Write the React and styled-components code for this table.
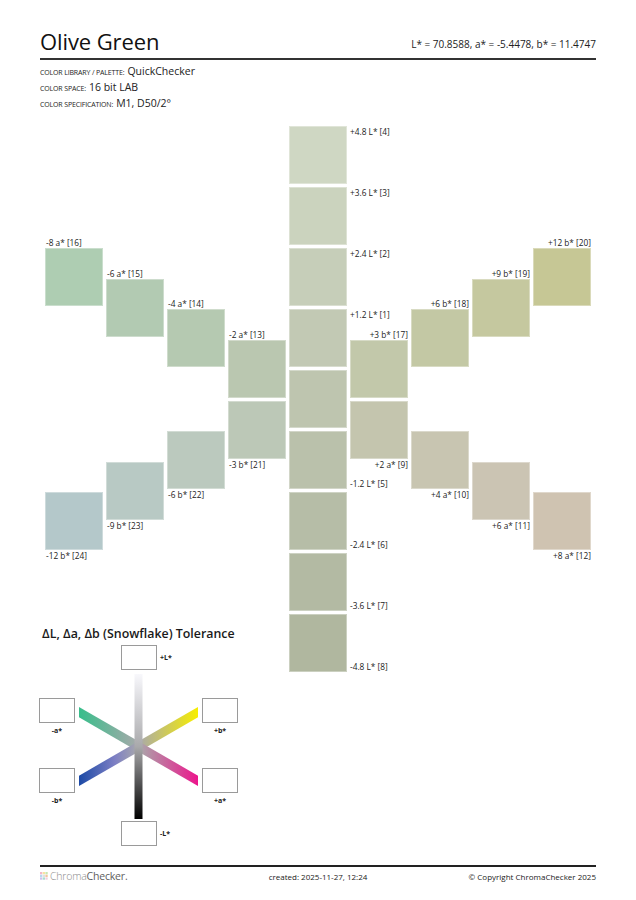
import styled, { createGlobalStyle } from "styled-components";

const GlobalStyle = createGlobalStyle`
  body {
    margin: 0;
    background: #fff;
    font-family: "Open Sans", "DejaVu Sans", sans-serif;
    color: #1a1a1a;
  }
`;

const Page = styled.div`
  width: 556px;
  padding: 26px 40px 0;
`;

const Header = styled.header`
  display: flex;
  justify-content: space-between;
  align-items: baseline;
  border-bottom: 2px solid #333;
  padding-bottom: 2px;
`;

const Title = styled.h1`
  margin: 0;
  font-size: 22px;
  line-height: 30px;
  font-weight: 400;
  letter-spacing: -0.1px;
  color: #111;
`;

const LabValue = styled.div`
  font-size: 10px;
  color: #222;
  position: relative;
  top: -2px;
`;

const Meta = styled.div`
  padding-top: 4px;
  display: flex;
  flex-direction: column;
`;

const MetaRow = styled.div`
  display: flex;
  align-items: baseline;
  line-height: 15px;
  font-size: 10.5px;
  color: #222;
`;

const MetaKey = styled.span`
  font-size: 7px;
  text-transform: uppercase;
  letter-spacing: -0.15px;
  margin-right: 3px;
`;

// swatch chart: 9 columns, rows at half the swatch pitch
const Chart = styled.div`
  display: grid;
  margin: 14px 0 0 5px;
  grid-template-columns: repeat(9, 58px);
  grid-template-rows: repeat(18, 27.5px);
  grid-auto-rows: auto;
  gap: 3px;
`;

const Swatch = styled.div`
  position: relative;
  grid-column: ${(p) => p.$col};
  grid-row: ${(p) => p.$row} / span 2;
  background: ${(p) => p.$bg};
  box-shadow: inset 0 0 0 1px rgba(255, 255, 255, 0.35);
`;

const labelPlaces = {
  rightTop: "left: calc(100% + 3px); top: 0;",
  rightBottom: "left: calc(100% + 3px); bottom: 0;",
  topLeft: "left: 1px; bottom: 100%;",
  topRight: "right: 0; bottom: 100%;",
  bottomLeft: "left: 1px; top: 100%;",
  bottomRight: "right: 0; top: 100%;",
};

const SwatchLabel = styled.span`
  position: absolute;
  ${(p) => labelPlaces[p.$pos]}
  font-size: 8.3px;
  line-height: 11px;
  white-space: nowrap;
  color: #222;
`;

const Tolerance = styled.section`
  grid-column: 1 / span 4;
  grid-row: 17 / span 3;
  margin-left: -6px;
  padding-top: 12px;
`;

const ToleranceTitle = styled.h2`
  margin: 0 0 1px 3px;
  font-size: 12.4px;
  line-height: 16px;
  font-weight: 600;
  white-space: nowrap;
  color: #1a1a1a;
`;

const Flake = styled.div`
  position: relative;
  width: 200px;
  height: 203px;
`;

const Arms = styled.svg`
  position: absolute;
  left: 0;
  top: 0;
`;

const Node = styled.div`
  position: absolute;
  left: ${(p) => p.$x}px;
  top: ${(p) => p.$y}px;
  display: flex;
  flex-direction: ${(p) => (p.$side === "right" ? "row" : "column")};
  align-items: center;
  gap: 3px;
`;

const NodeBox = styled.div`
  width: 34px;
  height: 23px;
  border: 1px solid #9a9a9a;
  background: #fff;
`;

const NodeLabel = styled.span`
  font-size: 7px;
  font-weight: 700;
  line-height: 9px;
  color: #222;
`;

const Footer = styled.footer`
  display: grid;
  grid-template-columns: 1fr auto 1fr;
  align-items: center;
  margin-top: 19px;
  border-top: 2px solid #222;
  padding-top: 2px;
  font-size: 8px;
  color: #222;
`;

const Brand = styled.div`
  display: flex;
  align-items: center;
  gap: 2px;
  font-size: 10.5px;
  letter-spacing: -0.2px;
`;

const BrandLight = styled.span`
  font-weight: 300;
  color: #8c8c8c;
`;

const BrandBold = styled.span`
  font-weight: 400;
  color: #5e5e5e;
`;

const FooterRight = styled.div`
  justify-self: end;
`;

const swatches = [
  { col: 5, r: 0, bg: "#cfd7c3", text: "+4.8 L* [4]", pos: "rightTop" },
  { col: 5, r: 2, bg: "#cbd3be", text: "+3.6 L* [3]", pos: "rightTop" },
  { col: 5, r: 4, bg: "#c6ceb9", text: "+2.4 L* [2]", pos: "rightTop" },
  { col: 5, r: 6, bg: "#c2c9b4", text: "+1.2 L* [1]", pos: "rightTop" },
  { col: 5, r: 8, bg: "#bec5af" },
  { col: 5, r: 10, bg: "#bac1ab", text: "-1.2 L* [5]", pos: "rightBottom" },
  { col: 5, r: 12, bg: "#b6bda7", text: "-2.4 L* [6]", pos: "rightBottom" },
  { col: 5, r: 14, bg: "#b3baa3", text: "-3.6 L* [7]", pos: "rightBottom" },
  { col: 5, r: 16, bg: "#b0b79f", text: "-4.8 L* [8]", pos: "rightBottom" },

  { col: 1, r: 4, bg: "#aecdb2", text: "-8 a* [16]", pos: "topLeft" },
  { col: 2, r: 5, bg: "#b2cab2", text: "-6 a* [15]", pos: "topLeft" },
  { col: 3, r: 6, bg: "#b5c9b1", text: "-4 a* [14]", pos: "topLeft" },
  { col: 4, r: 7, bg: "#bac7b0", text: "-2 a* [13]", pos: "topLeft" },

  { col: 4, r: 9, bg: "#bcc8b7", text: "-3 b* [21]", pos: "bottomLeft" },
  { col: 3, r: 10, bg: "#bbc9be", text: "-6 b* [22]", pos: "bottomLeft" },
  { col: 2, r: 11, bg: "#b8c9c4", text: "-9 b* [23]", pos: "bottomLeft" },
  { col: 1, r: 12, bg: "#b4c8ca", text: "-12 b* [24]", pos: "bottomLeft" },

  { col: 6, r: 7, bg: "#c2c8aa", text: "+3 b* [17]", pos: "topRight" },
  { col: 7, r: 6, bg: "#c3c8a4", text: "+6 b* [18]", pos: "topRight" },
  { col: 8, r: 5, bg: "#c5c89f", text: "+9 b* [19]", pos: "topRight" },
  { col: 9, r: 4, bg: "#c6c795", text: "+12 b* [20]", pos: "topRight" },

  { col: 6, r: 9, bg: "#c4c5ae", text: "+2 a* [9]", pos: "bottomRight" },
  { col: 7, r: 10, bg: "#c8c5b1", text: "+4 a* [10]", pos: "bottomRight" },
  { col: 8, r: 11, bg: "#cbc4b3", text: "+6 a* [11]", pos: "bottomRight" },
  { col: 9, r: 12, bg: "#cfc3b1", text: "+8 a* [12]", pos: "bottomRight" },
];

const nodes = [
  { x: 82, y: 2, label: "+L*", side: "right" },
  { x: 0, y: 55, label: "-a*", side: "below" },
  { x: 163, y: 55, label: "+b*", side: "below" },
  { x: 0, y: 125, label: "-b*", side: "below" },
  { x: 163, y: 125, label: "+a*", side: "below" },
  { x: 82, y: 178, label: "-L*", side: "right" },
];

// arm from outer x to the centre, cut vertically at the outer end
const cx = 99.5;
const cy = 103.5;
const h = 5.2;
const arm = (x, y) =>
  `${x},${y - h} ${cx},${cy - h} ${cx},${cy + h} ${x},${y + h}`;

function SnowflakeArms() {
  const grey = "#a9a9ab";
  return (
    <Arms width="200" height="203" viewBox="0 0 200 203">
      <defs>
        <linearGradient id="gL" x1="0" y1="31" x2="0" y2="176" gradientUnits="userSpaceOnUse">
          <stop offset="0" stopColor="#f8f8fc" />
          <stop offset="0.5" stopColor={grey} />
          <stop offset="1" stopColor="#000" />
        </linearGradient>
        <linearGradient id="gA" x1="40" y1="0" x2={cx} y2="0" gradientUnits="userSpaceOnUse">
          <stop offset="0" stopColor="#38be8b" />
          <stop offset="1" stopColor={grey} />
        </linearGradient>
        <linearGradient id="gB" x1={cx} y1="0" x2="159" y2="0" gradientUnits="userSpaceOnUse">
          <stop offset="0" stopColor={grey} />
          <stop offset="1" stopColor="#f7ee00" />
        </linearGradient>
        <linearGradient id="gNB" x1="40" y1="0" x2={cx} y2="0" gradientUnits="userSpaceOnUse">
          <stop offset="0" stopColor="#1c4aa6" />
          <stop offset="0.6" stopColor="#7d7fc4" />
          <stop offset="1" stopColor={grey} />
        </linearGradient>
        <linearGradient id="gPA" x1={cx} y1="0" x2="159" y2="0" gradientUnits="userSpaceOnUse">
          <stop offset="0" stopColor={grey} />
          <stop offset="1" stopColor="#ec168c" />
        </linearGradient>
      </defs>
      <polygon points={arm(40, 69.15)} fill="url(#gA)" />
      <polygon points={arm(159, 69.15)} fill="url(#gB)" />
      <polygon points={arm(40, 137.85)} fill="url(#gNB)" />
      <polygon points={arm(159, 137.85)} fill="url(#gPA)" />
      <rect x="95.5" y="31" width="8" height="145" fill="url(#gL)" />
    </Arms>
  );
}

function BrandMark() {
  const cells = ["#f4b6c8", "#f7e3a0", "#c8e6b0", "#b8d8f0", "#e0e0e0", "#f2c4a0", "#d0c0ec", "#a8dcd0", "#f0d0e0"];
  return (
    <svg width="8" height="8" viewBox="0 0 8 8">
      {cells.map((c, i) => (
        <rect key={i} x={(i % 3) * 2.7} y={Math.floor(i / 3) * 2.7} width="2.3" height="2.3" fill={c} />
      ))}
    </svg>
  );
}

export default function App() {
  return (
    <>
      <GlobalStyle />
      <Page>
        <Header>
          <Title>Olive Green</Title>
          <LabValue>L* = 70.8588, a* = -5.4478, b* = 11.4747</LabValue>
        </Header>
        <Meta>
          <MetaRow>
            <MetaKey>Color library / palette:</MetaKey>QuickChecker
          </MetaRow>
          <MetaRow>
            <MetaKey>Color space:</MetaKey>16 bit LAB
          </MetaRow>
          <MetaRow>
            <MetaKey>Color specification:</MetaKey>M1, D50/2°
          </MetaRow>
        </Meta>

        <Chart>
          {swatches.map((s, i) => (
            <Swatch key={i} $col={s.col} $row={s.r + 1} $bg={s.bg}>
              {s.text && <SwatchLabel $pos={s.pos}>{s.text}</SwatchLabel>}
            </Swatch>
          ))}
          <Tolerance>
            <ToleranceTitle>ΔL, Δa, Δb (Snowflake) Tolerance</ToleranceTitle>
            <Flake>
              <SnowflakeArms />
              {nodes.map((n) => (
                <Node key={n.label} $x={n.x} $y={n.y} $side={n.side}>
                  <NodeBox />
                  <NodeLabel>{n.label}</NodeLabel>
                </Node>
              ))}
            </Flake>
          </Tolerance>
        </Chart>

        <Footer>
          <Brand>
            <BrandMark />
            <span>
              <BrandLight>Chroma</BrandLight>
              <BrandBold>Checker.</BrandBold>
            </span>
          </Brand>
          <div>created: 2025-11-27, 12:24</div>
          <FooterRight>© Copyright ChromaChecker 2025</FooterRight>
        </Footer>
      </Page>
    </>
  );
}
